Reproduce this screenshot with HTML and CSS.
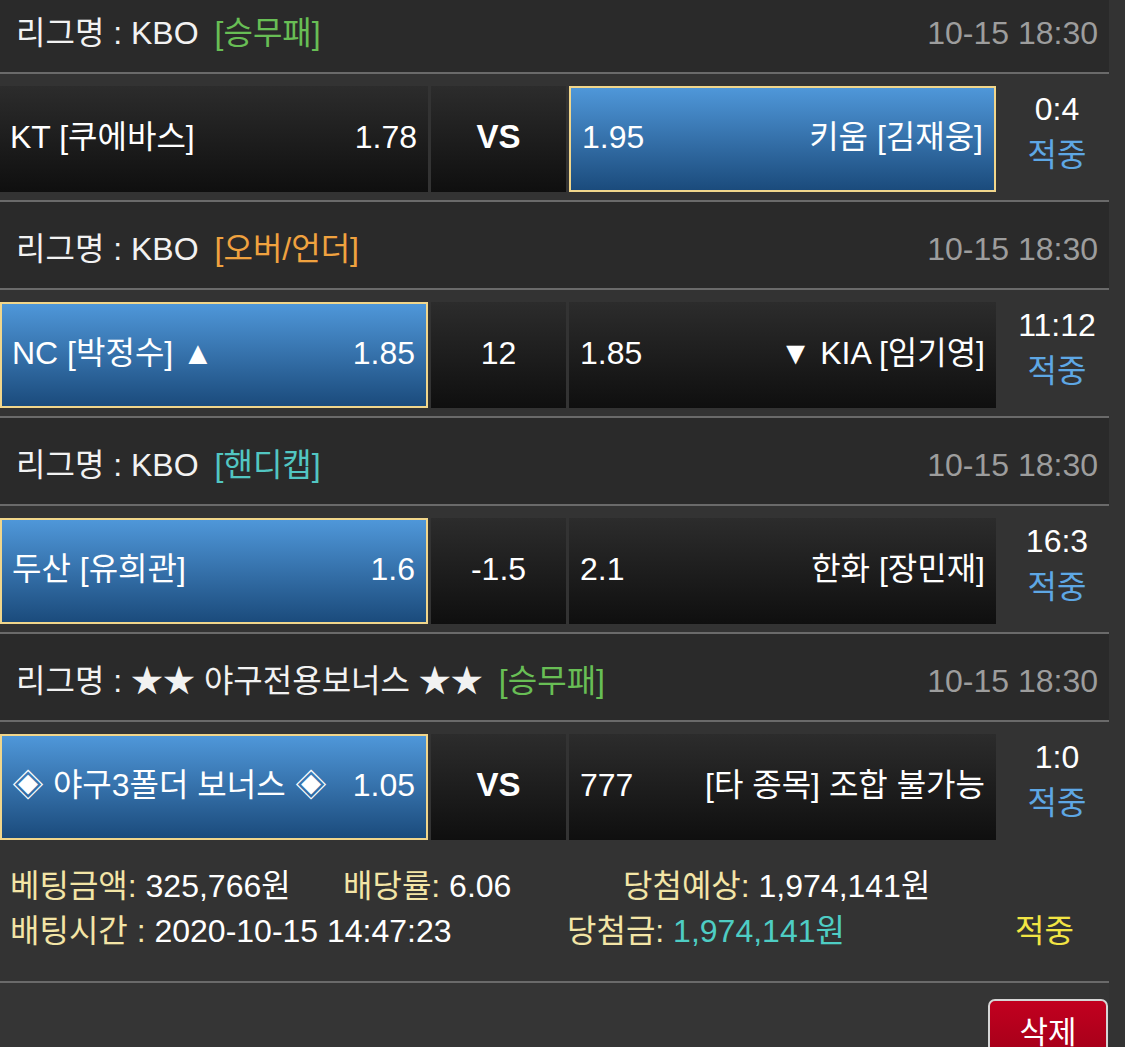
FILE: index.html
```html
<!DOCTYPE html>
<html lang="ko">
  <head>
    <meta charset="UTF-8" />
    <meta name="viewport" content="width=device-width, initial-scale=1.0" />
    <title>배팅내역</title>
    <link rel="stylesheet" href="styles.css">
  </head>

  <body>
    <div class="slip">
      <!-- Game 1 -->
      <section class="game">
        <div class="league">
          <span class="league-name">리그명 : KBO<span class="type type-win">[승무패]</span></span>
          <span class="league-time">10-15 18:30</span>
        </div>
        <div class="match">
          <div class="pick home"><span>KT [쿠에바스]</span><span>1.78</span></div>
          <div class="pick mid vs">VS</div>
          <div class="pick away selected"><span>1.95</span><span>키움 [김재웅]</span></div>
          <div class="result"><span class="score">0:4</span><span class="hit">적중</span></div>
        </div>
      </section>

      <!-- Game 2 -->
      <section class="game">
        <div class="league">
          <span class="league-name">리그명 : KBO<span class="type type-ou">[오버/언더]</span></span>
          <span class="league-time">10-15 18:30</span>
        </div>
        <div class="match">
          <div class="pick home selected"><span>NC [박정수] ▲</span><span>1.85</span></div>
          <div class="pick mid">12</div>
          <div class="pick away"><span>1.85</span><span>▼ KIA [임기영]</span></div>
          <div class="result"><span class="score">11:12</span><span class="hit">적중</span></div>
        </div>
      </section>

      <!-- Game 3 -->
      <section class="game">
        <div class="league">
          <span class="league-name">리그명 : KBO<span class="type type-hc">[핸디캡]</span></span>
          <span class="league-time">10-15 18:30</span>
        </div>
        <div class="match">
          <div class="pick home selected"><span>두산 [유희관]</span><span>1.6</span></div>
          <div class="pick mid">-1.5</div>
          <div class="pick away"><span>2.1</span><span>한화 [장민재]</span></div>
          <div class="result"><span class="score">16:3</span><span class="hit">적중</span></div>
        </div>
      </section>

      <!-- Game 4 -->
      <section class="game last">
        <div class="league">
          <span class="league-name">리그명 : ★★ 야구전용보너스 ★★<span class="type type-win">[승무패]</span></span>
          <span class="league-time">10-15 18:30</span>
        </div>
        <div class="match">
          <div class="pick home selected"><span>◈ 야구3폴더 보너스 ◈</span><span>1.05</span></div>
          <div class="pick mid vs">VS</div>
          <div class="pick away"><span>777</span><span>[타 종목] 조합 불가능</span></div>
          <div class="result"><span class="score">1:0</span><span class="hit">적중</span></div>
        </div>
      </section>

      <!-- Bet summary -->
      <div class="summary">
        <div class="sum-row">
          <span class="sum-a"><span class="label">베팅금액:</span> 325,766원</span>
          <span class="sum-b"><span class="label">배당률:</span> 6.06</span>
          <span><span class="label">당첨예상:</span> 1,974,141원</span>
        </div>
        <div class="sum-row">
          <span class="sum-wide"><span class="label">배팅시간 :</span> 2020-10-15 14:47:23</span>
          <span class="sum-c"><span class="label">당첨금:</span> <span class="win-amount">1,974,141원</span></span>
          <span class="status">적중</span>
        </div>
      </div>

      <div class="actions">
        <button class="btn-delete">삭제</button>
      </div>
    </div>
  </body>
</html>
```

FILE: styles.css
```css
:root {
  --page-bg: #333333;
  --header-bg: #2a2a2a;
  --line-color: #6a6a6a;
  --text-color: #f2f2f2;
  --muted-text: #9d9d9d;
  --label-color: #f3e5a6;
  --hit-color: #5ea7e4;
  --selected-border: #f1d68b;
}

* {
  box-sizing: border-box;
  margin: 0;
  padding: 0;
}

body {
  background-color: var(--page-bg);
  color: var(--text-color);
  font-family: "Liberation Sans", "Noto Sans CJK KR", sans-serif;
  font-size: 32px;
  overflow: hidden;
}

.slip {
  width: 1109px;
  margin-top: -14px;
}

/* League header */
.league {
  display: flex;
  justify-content: space-between;
  align-items: center;
  height: 88px;
  padding: 8px 11px 0 16px;
  line-height: 40px;
  background-color: var(--header-bg);
  border-bottom: 2px solid var(--line-color);
}

.type {
  margin-left: 16px;
}

.type-win {
  color: #68be55;
}

.type-ou {
  color: #f0a23f;
}

.type-hc {
  color: #52c6c2;
}

.league-time {
  color: var(--muted-text);
}

/* Match row */
.match {
  display: flex;
  gap: 3px;
  height: 128px;
  padding: 12px 0 8px 0;
  border-bottom: 2px solid var(--line-color);
}

.game.last .match {
  border-bottom: none;
  height: 126px;
}

.pick {
  display: flex;
  justify-content: space-between;
  align-items: center;
  height: 106px;
  padding-bottom: 4px;
  line-height: 40px;
  background: linear-gradient(#2c2c2c, #0f0f0f);
  color: #fff;
}

.home {
  width: 428px;
  padding-left: 10px;
  padding-right: 11px;
}

.mid {
  width: 135px;
  justify-content: center;
}

.vs {
  font-weight: 700;
  font-size: 33px;
}

.away {
  width: 427px;
  padding-left: 11px;
  padding-right: 11px;
}

.pick.selected {
  background: linear-gradient(#4f97d9, #1b4b7c);
  border: 2px solid var(--selected-border);
}

.result {
  flex: 1;
  display: flex;
  flex-direction: column;
  align-items: center;
  height: 106px;
  line-height: 46px;
  padding: 0 0 0 9px;
  margin-left: -3px;
}

.score {
  color: #fff;
}

.hit {
  color: var(--hit-color);
}

/* Summary */
.summary {
  padding: 16px 10px 27px 10px;
  border-bottom: 2px solid var(--line-color);
}

.sum-row {
  display: flex;
  height: 45px;
  line-height: 45px;
  color: #fff;
  white-space: nowrap;
}

.label {
  color: var(--label-color);
}

.sum-a {
  width: 333px;
}

.sum-b {
  width: 280px;
}

.sum-wide {
  width: 557px;
}

.sum-c {
  width: 448px;
}

.win-amount {
  color: #4ecdc4;
}

.status {
  color: #f2e544;
}

/* Delete button */
.actions {
  display: flex;
  justify-content: flex-end;
  padding: 16px 1px 0 0;
  background-color: #353535;
}

.btn-delete {
  width: 120px;
  height: 64px;
  padding-bottom: 4px;
  background: linear-gradient(#c2001f, #a10019);
  color: #fff;
  border: 2px solid #d6d6d6;
  border-radius: 7px;
  font-family: "Liberation Sans", "Noto Sans CJK KR", sans-serif;
  font-size: 31px;
  cursor: pointer;
}
```
